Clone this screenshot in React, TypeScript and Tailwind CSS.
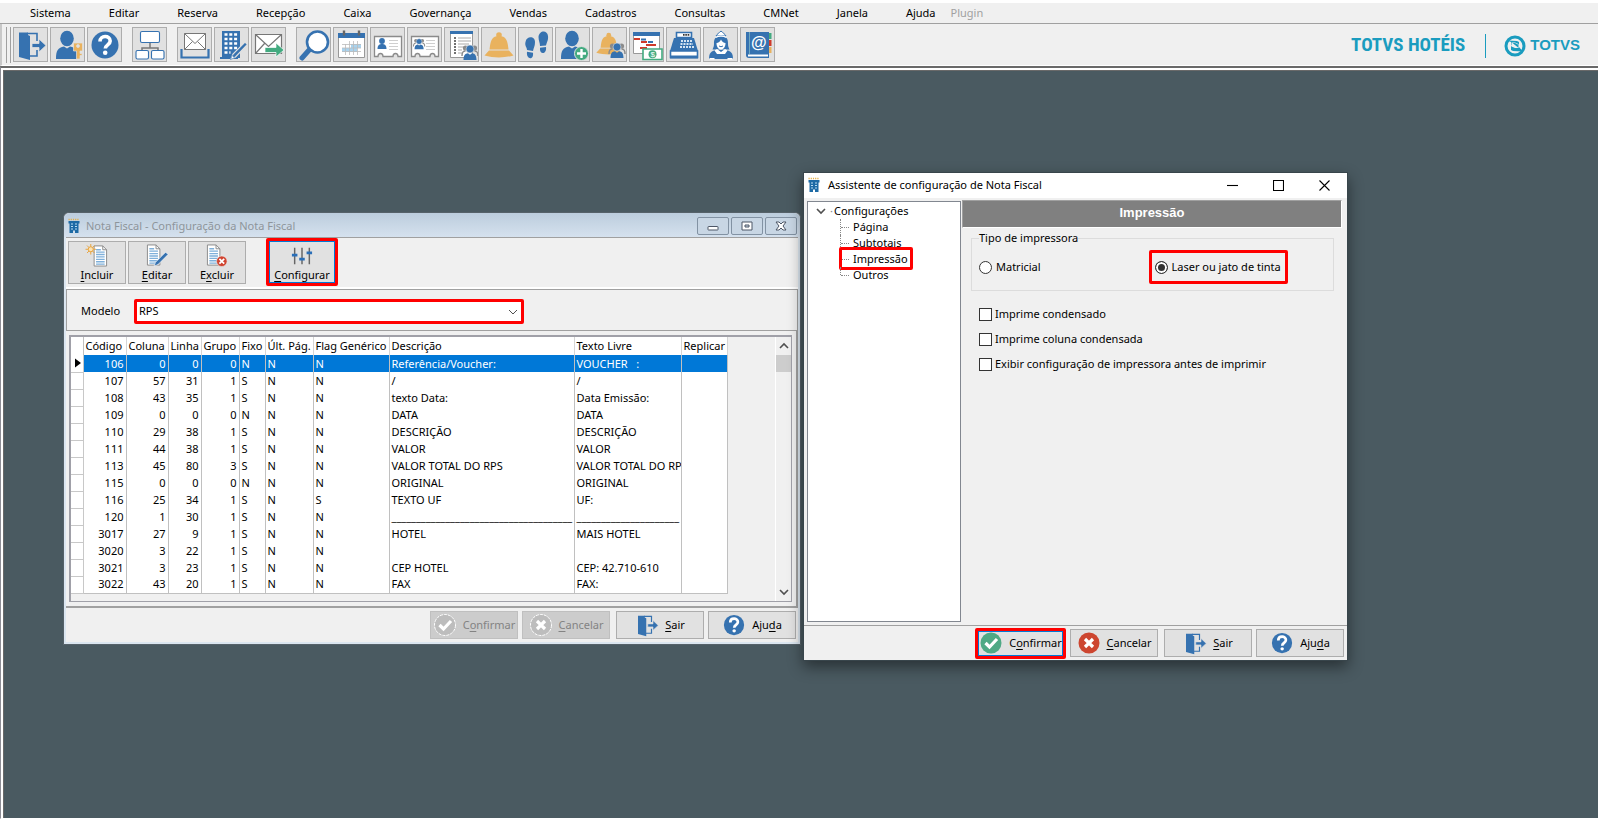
import React from "react";

const BLUE = "#3672b0";

const DoorIcon = ({ className = "size-8" }: { className?: string }) => (
  <svg viewBox="0 0 32 32" className={className} aria-hidden="true">
    <path d="M12 4.500h10V12M22 21v6H12" fill="none" stroke={BLUE} strokeWidth="1.600" />
    <path d="M4 3.500h9V6l2 1v24L4 28z" fill={BLUE} />
    <path d="M17 14.500h7V10l7 6.500-7 6.500v-4.500h-7z" fill={BLUE} stroke="#e1e1e1" strokeWidth=".8" />
  </svg>
);

const HelpIcon = ({ className = "size-8" }: { className?: string }) => (
  <svg viewBox="0 0 32 32" className={className} aria-hidden="true">
    <circle cx="16" cy="16" r="13.500" fill={BLUE} />
    <path d="M11 12.500c0-6.500 10.200-6.500 10.200-.5 0 3.800-4.900 3.800-4.900 7.500" fill="none" stroke="#fff" strokeWidth="3.600" />
    <circle cx="16.200" cy="23.800" r="2.300" fill="#fff" />
  </svg>
);

const Person = () => (
  <>
    <ellipse cx="15" cy="9.500" rx="6.800" ry="7.700" fill={BLUE} />
    <path d="M4 30c0-9 2-11 8-12.500l3 2 3-2c6 1.500 8 3.500 8 12.500z" fill={BLUE} />
  </>
);

const Trio = () => (
  <g>
    <circle cx="3.500" cy="4" r="2.600" fill="#8b8b8b" />
    <circle cx="12.500" cy="4" r="2.600" fill="#8b8b8b" />
    <path d="M0 12c0-4 1-5 3.500-5M16 12c0-4-1-5-3.500-5" fill="none" stroke="#8b8b8b" strokeWidth="1.500" />
    <circle cx="8" cy="5" r="4" fill={BLUE} stroke="#e1e1e1" strokeWidth=".6" />
    <path d="M1.500 16c0-4.500 1.500-6.500 4.500-6.800l2 1.500 2-1.500c3 .3 4.500 2.300 4.500 6.800z" fill={BLUE} />
  </g>
);

const Bell = () => (
  <g fill="#e9b25e">
    <circle cx="16" cy="6" r="2.800" />
    <path d="M6.500 20.500C7.500 11 9 7 16 7s8.500 4 9.500 13.500z" />
    <path d="M6 21.500h20l4.500 5c-9 2.500-20 2.500-29 0z" />
  </g>
);

const CardShape = () => (
  <>
    <path d="M2.500 7.500h27v20H26c0-4-5-4-5 0H11c0-4-5-4-5 0H2.500z" fill="#fff" stroke="#8b8b8b" strokeWidth="1.300" />
    <path d="M17 11.500h9M17 14.500h9M17 17.500h9M17 20.500h9" stroke="#cfcfcf" strokeWidth="1" />
  </>
);

const art: Record<string, React.ReactNode> = {
  user: (
    <>
      <Person />
      <g fill="#e9b25e" stroke="#e1e1e1" strokeWidth=".7">
        <path d="M21.500 14h9v8H28v2.500h2v2h-2V30h-3.500v-8h-3z" />
        <circle cx="26" cy="17" r="1.500" fill="#e1e1e1" />
      </g>
    </>
  ),
  tree: (
    <>
      <path d="M16 13v6M8 23v-4h16v4" fill="none" stroke="#777" strokeWidth="1.500" />
      <g fill="#fff" stroke={BLUE} strokeWidth="1.100">
        <rect x="6.500" y="2.500" width="19" height="11" rx="1.500" />
        <rect x="2" y="21.500" width="12.500" height="8.500" rx="1.500" />
        <rect x="17.500" y="21.500" width="12.500" height="8.500" rx="1.500" />
      </g>
    </>
  ),
  inbox: (
    <>
      <path d="M5.500 4.500h21v16h-21z" fill="#fff" stroke="#777" strokeWidth="1" />
      <path d="m5.500 4.500 10.500 10 10.500-10M5.500 20.500l8-8M26.500 20.500l-8-8" fill="none" stroke="#777" strokeWidth="1" />
      <path d="M2.500 20v8.500h27V20" fill="none" stroke={BLUE} strokeWidth="2.200" />
    </>
  ),
  building: (
    <>
      <path d="M6 2h18v27H6z" fill={BLUE} />
      <path d="M8.500 5.500H22M8.500 10H22M8.500 14.500H22M8.500 19H22M8.500 23.500h6" stroke="#fff" strokeWidth="2.400" strokeDasharray="3 1.800" />
      <path d="M4 29h18" stroke={BLUE} strokeWidth="2" />
      <path d="m15 30 2-5 12-12 2.500 2.500-12 12.500z" fill={BLUE} stroke="#e1e1e1" strokeWidth="1.200" />
      <path d="m14.500 30.500 1.700-4 2.300 2.300z" fill="#fff" stroke={BLUE} strokeWidth=".6" />
    </>
  ),
  send: (
    <>
      <path d="M2.500 5.500h26v19h-26z" fill="#fff" stroke="#777" strokeWidth="1.200" />
      <path d="m2.500 5.500 13 12 13-12M2.500 24.500l9-10" fill="none" stroke="#777" strokeWidth="1.200" />
      <path d="M12 18.500h11V14l8 7-8 7v-4.500H12z" fill="#43aa80" stroke="#fff" strokeWidth=".7" />
    </>
  ),
  search: (
    <>
      <path d="M12 20 4 29" stroke={BLUE} strokeWidth="5" strokeLinecap="round" />
      <circle cx="19.500" cy="13" r="10.500" fill="#fff" stroke={BLUE} strokeWidth="2.600" />
    </>
  ),
  calendar: (
    <>
      <path d="M3.500 4.500h26v24h-26z" fill="#fff" stroke="#999" />
      <path d="M3 4h27v5H3z" fill={BLUE} />
      <path d="M9 1.500v5M24 1.500v5" stroke="#666" strokeWidth="2.400" />
      <path d="M7 19h15v4H7zM16 15h10v4H16z" fill="#a9d3ee" />
      <path d="M10.500 15v11M14.500 12v14M18.500 12v14M22.500 12v14M7 15.500h19M7 19h19M7 22.500h19" stroke="#bbb" strokeWidth=".8" />
    </>
  ),
  card: (
    <>
      <CardShape />
      <circle cx="10" cy="12" r="2.900" fill={BLUE} />
      <path d="M5.500 20c0-4 2-5 4.500-5s4.500 1 4.500 5z" fill={BLUE} />
    </>
  ),
  groupcard: (
    <>
      <CardShape />
      <g transform="translate(4.500 9) scale(.7)">
        <Trio />
      </g>
    </>
  ),
  list: (
    <>
      <path d="M4.500 3.500h22v25h-22z" fill="#fff" stroke="#999" />
      <path d="M4 2h23v3H4z" fill={BLUE} />
      <path d="M12 9h13M12 12h13M12 15h11M12 18h6M12 21h4M12 24h4" stroke="#aaa" strokeWidth="1.200" />
      <path d="M8 9h2M8 12h2M8 15h2M8 18h2M8 21h2M8 24h2" stroke="#444" strokeWidth="1.400" />
      <g transform="translate(16 15)">
        <Trio />
      </g>
    </>
  ),
  bell: <Bell />,
  feet: (
    <g fill={BLUE}>
      <path d="M5.500 13c1-6.500 10-6 9.500.5 0 3.500-1.500 5.500-2 8.500L7 21c0-3-2.500-4-1.500-8zM7 22.800l6 .9c1 8-7 7-6-.9z" />
      <path d="M18.500 8c.5-7 9-7.500 9.500-1 .5 4.500-1.500 6.500-2 9.500l-6 .5c0-3-1.500-5.500-1.500-9zM20 18.800l6-.8c1 8-7 8-6 .8z" />
    </g>
  ),
  adduser: (
    <>
      <Person />
      <circle cx="24.500" cy="24.500" r="7" fill="#43aa80" stroke="#e1e1e1" />
      <path d="M24.500 20v9M20 24.500h9" stroke="#fff" strokeWidth="2.400" />
    </>
  ),
  bellgroup: (
    <>
      <g transform="translate(1 1) scale(.86)">
        <Bell />
      </g>
      <g transform="translate(15 13)">
        <Trio />
      </g>
    </>
  ),
  money: (
    <>
      <path d="M2.500 4.500h26v20h-26z" fill="#fff" stroke="#999" />
      <path d="M2 3h27v4H2z" fill={BLUE} />
      <path d="M3 10h6M10 13h6M15 16h10M9 19h7" stroke="#cf3a2b" strokeWidth="2" />
      <path d="M10 10.500h5M17 13h5" stroke={BLUE} strokeWidth="2" />
      <path d="M12 20h19v10.500H12z" fill="#fff" stroke="#43aa80" strokeWidth="1.600" />
      <circle cx="21.500" cy="25.300" r="4" fill="#43aa80" />
      <text x="19.400" y="28.200" fontSize="8" fill="#fff" fontFamily="Liberation Sans">$</text>
    </>
  ),
  register: (
    <>
      <path d="M8.500 3.500h15v5h-15z" fill="#fff" stroke={BLUE} strokeWidth="1.600" />
      <path d="M15 5.800h7" stroke="#333" strokeWidth="1.800" strokeDasharray="1.600 .7" />
      <path d="M6 9h20l4 13H2z" fill={BLUE} />
      <path d="M13 12h11M12.500 15H25M12 18h14" stroke="#d5e4f2" strokeWidth="1.800" strokeDasharray="2 1" />
      <path d="M2.500 22h27v6.500h-27z" fill="#fff" stroke={BLUE} strokeWidth="1.600" />
      <path d="M2 26.500h28v3H2z" fill={BLUE} />
    </>
  ),
  maid: (
    <>
      <path d="M11 7c1-2 3-3 5-5 2 2 4 3 5 5z" fill="#fff" stroke={BLUE} />
      <path d="M9 15C8 3 24 3 23 15c0 3 1 4 1.500 5.500h-17C8 19 9 18 9 15z" fill={BLUE} />
      <path d="M10.500 8.500c3-2 8-2 11 0" fill="none" stroke="#fff" strokeWidth="1.500" />
      <path d="M11.500 14c2 0 3.500-1.500 4.500-3.500 1 2 2.500 3.500 4.500 3.500 0 4-2 6.500-4.500 6.500S11.500 18 11.500 14z" fill="#fff" />
      <path d="M14 17q2 1.500 4 0" fill="none" stroke={BLUE} />
      <path d="M4 30c0-6 2-8 7-9h10c5 1 7 3 7 9z" fill={BLUE} />
      <path d="M9.500 21.500 12 25h8l2.500-3.500L20 20l-4 3-4-3z" fill="#fff" />
      <path d="M4.500 29h5v1.500h-5zM22.500 29h5v1.500h-5z" fill="#fff" />
    </>
  ),
  book: (
    <>
      <path d="M27 4h2.500v6H27z" fill="#43aa80" />
      <path d="M27 11h2.500v6H27z" fill="#cf3a2b" />
      <path d="M27 18h2.500v6H27z" fill="#e9b25e" />
      <path d="M4 3h23v26H7c-2 0-3-1-3-3z" fill={BLUE} />
      <path d="M6 26.500h20" stroke="#fff" strokeWidth="2" />
      <path d="M7.500 3v22" stroke="#9cc" strokeWidth=".6" />
      <text x="9" y="18.500" fontSize="16" fontWeight="bold" fill="#fff" fontFamily="Liberation Sans">@</text>
    </>
  ),
};

const tools: { name: string; label: string }[][] = [
  [
    { name: "door", label: "Sair" },
    { name: "user", label: "Usuário" },
    { name: "help", label: "Ajuda" },
  ],
  [{ name: "tree", label: "Estrutura" }],
  [
    { name: "inbox", label: "Mensagens" },
    { name: "building", label: "Hotel" },
    { name: "send", label: "Enviar" },
  ],
  [
    { name: "search", label: "Pesquisar" },
    { name: "calendar", label: "Calendário" },
    { name: "card", label: "Ficha" },
    { name: "groupcard", label: "Ficha de grupo" },
    { name: "list", label: "Lista" },
    { name: "bell", label: "Recepção" },
    { name: "feet", label: "Walk-in" },
    { name: "adduser", label: "Novo hóspede" },
    { name: "bellgroup", label: "Grupos" },
    { name: "money", label: "Contas" },
    { name: "register", label: "Caixa" },
    { name: "maid", label: "Governança" },
    { name: "book", label: "Agenda" },
  ],
];

const menus = [
  "Sistema", "Editar", "Reserva", "Recepção", "Caixa", "Governança",
  "Vendas", "Cadastros", "Consultas", "CMNet", "Janela", "Ajuda",
];

const HotelIcon = () => (
  <svg viewBox="0 0 12 16" className="h-4 w-3 shrink-0" aria-hidden="true">
    <path d="M.5 1.500h11" stroke="#e2b04a" strokeWidth="1.400" strokeDasharray="1.200 1" />
    <path d="M.5 3h11v2.500h-1V15H7v-2.500H5V15H1.500V5.500h-1z" fill="#1d6aa5" />
    <path d="M3 6h2M7 6h2M3 8.500h2M7 8.500h2M3 11h2M7 11h2" stroke="#b9dcf2" strokeWidth="1.100" />
  </svg>
);

const Sheet = () => (
  <>
    <path d="M5 1h9l4 4v17H5z" fill="#fff" stroke="#8a8a8a" />
    <path d="M14 1v4h4" fill="none" stroke="#8a8a8a" />
    <path d="M7 5h5M7 7.500h9M7 10h9M7 12.500h9M7 15h9M7 17.500h9M7 20h9" stroke="#7fb0da" strokeWidth="1.400" />
  </>
);

const NewDoc = () => (
  <svg viewBox="0 0 24 24" className="size-6" aria-hidden="true">
    <g transform="translate(4 1)">
      <Sheet />
    </g>
    <path d="M5.500 0v11M0 5.500h11M1.600 1.600l7.800 7.800M9.400 1.600 1.600 9.400" stroke="#e8a33d" strokeWidth="1" />
    <circle cx="5.500" cy="5.500" r="2.600" fill="#fbe3b5" stroke="#e8a33d" />
  </svg>
);
const EditDoc = () => (
  <svg viewBox="0 0 24 24" className="size-6" aria-hidden="true">
    <g transform="translate(-3 0)">
      <Sheet />
    </g>
    <path d="m9 23 1.500-4L21 8.500l2.500 2.500L13 21.500z" fill={BLUE} stroke="#fff" strokeWidth=".6" />
  </svg>
);
const DeleteDoc = () => (
  <svg viewBox="0 0 24 24" className="size-6" aria-hidden="true">
    <g transform="translate(-3 0)">
      <Sheet />
    </g>
    <circle cx="17" cy="18" r="5.500" fill="#d0432f" stroke="#eee" strokeWidth=".6" />
    <path d="m14.500 15.500 5 5M19.500 15.500l-5 5" stroke="#fff" strokeWidth="1.800" />
  </svg>
);
const Sliders = () => (
  <svg viewBox="0 0 24 24" className="size-6" aria-hidden="true">
    <path d="M4 3v18M12 3v18M20 3v18" stroke="#666" strokeWidth="1.600" />
    <path d="M1 9.500h6v3H1zM9 14h6v3H9zM17 7h6v3h-6z" fill="#2a6fb8" />
  </svg>
);

const Mark = ({ kind, muted = false }: { kind: "ok" | "no"; muted?: boolean }) => (
  <svg viewBox="0 0 24 24" className="size-6 shrink-0" aria-hidden="true">
    <circle
      cx="12" cy="12" r="10.500"
      fill={muted ? "#bdbdbd" : kind === "ok" ? "#4fa985" : "#cd4630"}
      stroke={muted ? "#fff" : "none"}
      strokeDasharray={muted ? "3 1" : undefined}
    />
    <path d={kind === "ok" ? "m6.500 12 4 4 7.500-8" : "m8 8 8 8M16 8l-8 8"} fill="none" stroke="#fff" strokeWidth="3.200" />
  </svg>
);

/* Caption with its keyboard accelerator underlined */
const Caption = ({ text, at }: { text: string; at: number }) => (
  <span>
    {text.slice(0, at)}
    <u className="underline-offset-2">{text[at]}</u>
    {text.slice(at + 1)}
  </span>
);

const DocButton = ({ icon, text, at }: { icon: React.ReactNode; text: string; at: number }) => (
  <button className="flex h-[43px] w-[58px] flex-col items-center justify-between border border-[#adadad] bg-[#e1e1e1] pt-0.5 leading-4">
    {icon}
    <Caption text={text} at={at} />
  </button>
);

const FootButton = ({ icon, text, at, look = "normal" }: {
  icon: React.ReactNode; text: string; at: number; look?: "normal" | "disabled" | "marked";
}) => (
  <button
    disabled={look === "disabled"}
    className={
      "flex items-center justify-center gap-1.5 text-[11px] " +
      (look === "disabled"
        ? "h-7 w-[88px] border border-[#bfbfbf] bg-[#cccccc] text-[#838383]"
        : look === "marked"
          ? "h-[31px] w-[91px] rounded-xs border-[3px] border-[#ff0000] bg-[#e1e1e1] inset-ring inset-ring-[#0078d7]"
          : "h-7 w-[88px] border border-[#adadad] bg-[#e1e1e1]")
    }
  >
    {icon}
    <Caption text={text} at={at} />
  </button>
);

const rows: string[][] = [
  ["106", "0", "0", "0", "N", "N", "N", "Referência/Voucher:", "VOUCHER   :"],
  ["107", "57", "31", "1", "S", "N", "N", "/", "/"],
  ["108", "43", "35", "1", "S", "N", "N", "texto Data:", "Data Emissão:"],
  ["109", "0", "0", "0", "N", "N", "N", "DATA", "DATA"],
  ["110", "29", "38", "1", "S", "N", "N", "DESCRIÇÃO", "DESCRIÇÃO"],
  ["111", "44", "38", "1", "S", "N", "N", "VALOR", "VALOR"],
  ["113", "45", "80", "3", "S", "N", "N", "VALOR TOTAL DO RPS", "VALOR TOTAL DO RPS"],
  ["115", "0", "0", "0", "N", "N", "N", "ORIGINAL", "ORIGINAL"],
  ["116", "25", "34", "1", "S", "N", "S", "TEXTO UF", "UF:"],
  ["120", "1", "30", "1", "S", "N", "N", "_".repeat(37), "_".repeat(21)],
  ["3017", "27", "9", "1", "S", "N", "N", "HOTEL", "MAIS HOTEL"],
  ["3020", "3", "22", "1", "S", "N", "N", "", ""],
  ["3021", "3", "23", "1", "S", "N", "N", "CEP HOTEL", "CEP: 42.710-610"],
  ["3022", "43", "20", "1", "S", "N", "N", "FAX", "FAX:"],
];

const columns = ["Código", "Coluna", "Linha", "Grupo", "Fixo", "Últ. Pág.", "Flag Genérico", "Descrição", "Texto Livre", "Replicar"];

const Grid = () => (
  <table className="w-[656px] table-fixed border-collapse bg-white text-[11px] leading-4">
    <colgroup>
      <col className="w-3" />
      <col className="w-[43px]" />
      <col className="w-[42px]" />
      <col className="w-[33px]" />
      <col className="w-[38px]" />
      <col className="w-[26px]" />
      <col className="w-[48px]" />
      <col className="w-[76px]" />
      <col className="w-[185px]" />
      <col className="w-[107px]" />
      <col className="w-[46px]" />
    </colgroup>
    <thead>
      <tr className="h-[18px]">
        <th className="border-r border-[#c0c0c0] p-0" />
        {columns.map((c) => (
          <th key={c} className="overflow-visible border-r border-[#d5d5d5] p-0 pl-0.5 text-left font-normal whitespace-nowrap">
            {c}
          </th>
        ))}
      </tr>
    </thead>
    <tbody className="border-b border-[#c0c0c0]">
      {rows.map((r, i) => (
        <tr key={r[0]} className={i === 0 ? "h-[17px] bg-[#0078d7] text-white" : "h-[17px]"}>
          <td className="border-r border-b border-[#c8c8c8] bg-white p-0">
            {i === 0 && (
              <svg viewBox="0 0 8 12" className="ml-1 h-3 w-1.5" aria-hidden="true">
                <path d="M0 0 8 6 0 12z" fill="#000" />
              </svg>
            )}
          </td>
          {r.map((v, j) => (
            <td
              key={j}
              className={
                "overflow-hidden border-r border-[#c0c0c0] p-0 whitespace-pre " +
                (j < 4 ? "pr-0.5 text-right" : "pl-0.5")
              }
            >
              {v}
            </td>
          ))}
          <td className="border-r border-[#c0c0c0] p-0" />
        </tr>
      ))}
    </tbody>
  </table>
);

const Chevron = ({ d, className }: { d: string; className: string }) => (
  <svg viewBox="0 0 10 10" className={className} aria-hidden="true">
    <path d={d} fill="none" stroke="#505050" strokeWidth="1.600" />
  </svg>
);

const InvoiceWindow = () => (
  <section className="absolute top-[212px] left-[63px] flex w-[738px] flex-col rounded-t-md border border-[#56626a] bg-[#f0f0f0] pb-0.5 shadow-[inset_0_0_0_2px_#dbe6f0]">
    <header className="flex h-6 items-center gap-1.5 rounded-t-md bg-gradient-to-b from-[#bccddd] to-[#d5e1ee] pt-0.5 pr-[3px] pl-1 text-[#8e959b]">
      <HotelIcon />
      <h2 className="flex-1 text-[11px]">Nota Fiscal - Configuração da Nota Fiscal</h2>
      <div className="flex gap-0.5">
        {["Minimizar", "Restaurar", "Fechar"].map((l, i) => (
          <button key={l} aria-label={l} className="flex h-[18px] w-8 items-center justify-center rounded-xs border border-[#8292a3] bg-[#c8d6e4]">
            <svg viewBox="0 0 12 10" className="h-2.5 w-3" aria-hidden="true">
              <g fill="#fff" stroke="#4d5666" strokeWidth="1">
                {i === 0 && <rect x="1" y="5.500" width="10" height="3.500" rx=".5" />}
                {i === 1 && <path fillRule="evenodd" d="M1 1h10v8H1zM4 4h4v2H4z" />}
                {i === 2 && <path d="M1 1h3l2 2 2-2h3L8 5l3 4H8L6 7 4 9H1l3-4z" />}
              </g>
            </svg>
          </button>
        ))}
      </div>
    </header>
    <div className="mx-0.5 flex h-[52px] items-start gap-0.5 border-t border-b-2 border-t-[#a0a0a0] border-b-white pt-[3px] pl-0.5 text-[11px]">
      <DocButton icon={<NewDoc />} text="Incluir" at={0} />
      <DocButton icon={<EditDoc />} text="Editar" at={0} />
      <DocButton icon={<DeleteDoc />} text="Excluir" at={1} />
      <button className="-mt-[3px] ml-[18px] flex h-12 w-[72px] flex-col items-center justify-between rounded-xs border-[3px] border-[#ff0000] bg-[#e1e1e1] pt-1 leading-4 inset-ring inset-ring-[#0078d7]">
        <Sliders />
        <Caption text="Configurar" at={0} />
      </button>
    </div>
    <div className="mx-0.5 flex h-[42px] items-center border border-[#a0a0a0] pt-0.5 pl-[14px]">
      <label htmlFor="modelo" className="w-[53px] text-[11px]">Modelo</label>
      <div className="relative w-[390px]">
        <select id="modelo" className="block h-[25px] w-full appearance-none rounded-xs border-[3px] border-[#ff0000] bg-white pl-0.5 text-[11px] leading-4">
          <option>RPS</option>
        </select>
        <svg viewBox="0 0 10 10" className="pointer-events-none absolute top-2 right-1.5 size-2.5" aria-hidden="true">
          <path d="M1 3l4 4 4-4" fill="none" stroke="#505050" strokeWidth="1" />
        </svg>
      </div>
    </div>
    <div className="mx-0.5 border-r-2 border-b-2 border-[#a0a0a0] py-1 pr-1 pl-[3px]">
      <div className="flex h-[267px] justify-between border-2 border-r border-b border-[#a0a0a8]">
        <div className="overflow-hidden">
          <Grid />
        </div>
        <div className="flex w-4 flex-col items-center border-l border-white">
          <Chevron d="M1 7l4-4 4 4" className="my-1 size-2.5" />
          <div className="h-[17px] w-full bg-[#cdcdcd]" />
          <Chevron d="M1 3l4 4 4-4" className="mt-auto mb-1 size-2.5" />
        </div>
      </div>
    </div>
    <footer className="flex h-[34px] items-center justify-end gap-1 pr-1">
      <FootButton icon={<Mark kind="ok" muted />} text="Confirmar" at={1} look="disabled" />
      <FootButton icon={<Mark kind="no" muted />} text="Cancelar" at={0} look="disabled" />
      <span className="ml-0.5">
        <FootButton icon={<DoorIcon className="size-6" />} text="Sair" at={0} />
      </span>
      <FootButton icon={<HelpIcon className="size-6" />} text="Ajuda" at={3} />
    </footer>
  </section>
);

const branches = ["Página", "Subtotais", "Impressão", "Outros"];
const options = ["Imprime condensado", "Imprime coluna condensada", "Exibir configuração de impressora antes de imprimir"];

const Radio = ({ label, on = false }: { label: string; on?: boolean }) => (
  <label className="flex items-center gap-1 text-[11px] leading-4">
    <input
      type="radio"
      name="impressora"
      defaultChecked={on}
      className="size-[13px] appearance-none rounded-full border border-[#333] bg-white checked:bg-[#333] checked:inset-ring-2 checked:inset-ring-white"
    />
    {label}
  </label>
);

const AssistantWindow = () => (
  <section className="absolute top-[172px] left-[803px] flex h-[489px] w-[545px] flex-col border border-[#38454b] bg-[#f0f0f0] shadow-[0_6px_14px_rgba(0,0,0,0.45)]">
    <header className="flex h-[25px] shrink-0 items-center gap-2 bg-white pr-1 pb-px pl-1">
      <HotelIcon />
      <h2 className="flex-1 text-[11px]">Assistente de configuração de Nota Fiscal</h2>
      <div className="flex gap-2">
        {["Minimizar", "Maximizar", "Fechar"].map((l, i) => (
          <button key={l} aria-label={l} className="flex w-[38px] justify-center">
            <svg viewBox="0 0 11 11" className="size-[11px]" aria-hidden="true">
              <path d={["M0 5.500h11", "M.5.5h10v10H.5z", "M.5.5l10 10M10.500.5l-10 10"][i]} fill="none" stroke="#000" strokeWidth="1.100" />
            </svg>
          </button>
        ))}
      </div>
    </header>
    <div className="flex min-h-0 flex-1 gap-px pt-0.5 pr-[5px] pl-[3px]">
      <nav className="mt-px mb-[3px] w-[154px] border border-[#828790] bg-white pt-px text-[11px] leading-4">
        <div className="flex items-center pl-2">
          <Chevron d="M1 3l4 4 4-4" className="mr-1 size-2.5" />
          <span className="w-1 text-[#888]">·</span>
          Configurações
        </div>
        <ul className="ml-8">
          {branches.map((b, i) => (
            <li key={b} className="relative flex h-4 items-center gap-1">
              <span className={"w-px self-start border-l border-dotted border-[#888] " + (i === 3 ? "h-2" : "h-4")} />
              <span className="-ml-1 w-2 border-t border-dotted border-[#888]" />
              {b}
              {b === "Impressão" && (
                <span className="absolute -top-1 -left-px h-[23px] w-[74px] rounded-xs border-[3px] border-[#ff0000]" />
              )}
            </li>
          ))}
        </ul>
      </nav>
      <div className="flex-1">
        <h3 className="h-7 border border-t-[#a0a0a0] border-r-white border-b-white border-l-[#a0a0a0] bg-[#808080] text-center font-['Liberation_Sans',sans-serif] text-[13px] leading-6 font-bold text-white">
          Impressão
        </h3>
        <fieldset className="mt-0.5 mr-2 ml-[9px] h-[61px] border border-[#dcdcdc] px-[7px]">
          <legend className="text-[11px] leading-4">Tipo de impressora</legend>
          <div className="grid grid-cols-2 items-center pt-1">
            <Radio label="Matricial" />
            <div className="-ml-1 flex h-[34px] w-[139px] items-center rounded-xs border-[3px] border-[#ff0000] pl-[3px]">
              <Radio label="Laser ou jato de tinta" on />
            </div>
          </div>
        </fieldset>
        <div className="mt-[15px] ml-[17px] flex flex-col gap-[9px]">
          {options.map((o) => (
            <label key={o} className="flex items-center gap-[3px] text-[11px] leading-4">
              <input type="checkbox" className="size-[13px] appearance-none border border-[#333] bg-white" />
              {o}
            </label>
          ))}
        </div>
      </div>
    </div>
    <footer className="flex h-[35px] shrink-0 items-center justify-end gap-1 border-t border-[#a0a0a0] pr-[3px]">
      <FootButton icon={<Mark kind="ok" />} text="Confirmar" at={1} look="marked" />
      <FootButton icon={<Mark kind="no" />} text="Cancelar" at={0} />
      <span className="ml-0.5">
        <FootButton icon={<DoorIcon className="size-6" />} text="Sair" at={0} />
      </span>
      <FootButton icon={<HelpIcon className="size-6" />} text="Ajuda" at={3} />
    </footer>
  </section>
);

export default function App() {
  return (
    <div className="flex min-h-screen flex-col bg-[#f0f0f0] font-['Noto_Sans',sans-serif] text-black">
      <nav className="flex h-6 items-center gap-[38px] border-t-[3px] border-b border-t-white border-b-[#a0a0a0] pl-[30px] text-[11px] leading-4">
        {menus.map((m) => (
          <button key={m}>{m}</button>
        ))}
        <button disabled className="-ml-[23px] text-[#a0a0a0]">Plugin</button>
      </nav>
      <div className="flex h-[42px] items-center border-b border-l-2 border-b-white border-l-[#c8c8c8] pr-[18px]">
        <div className="mr-0.5 ml-1 h-9 w-[5px] border-x border-[#a0a0a0]" />
        <div className="flex gap-[10px]">
          {tools.map((g, i) => (
            <div key={i} className="flex gap-0.5">
              {g.map((t) => (
                <button key={t.name} aria-label={t.label} className="flex size-[35px] items-center justify-center border border-[#adadad] bg-[#e1e1e1]">
                  {t.name === "door" ? (
                    <DoorIcon />
                  ) : t.name === "help" ? (
                    <HelpIcon />
                  ) : (
                    <svg viewBox="0 0 32 32" className="size-8" aria-hidden="true">
                      {art[t.name]}
                    </svg>
                  )}
                </button>
              ))}
            </div>
          ))}
        </div>
        <div className="ml-auto flex items-center pt-0.5 text-[#1a9cbf]">
          <span className="font-['Liberation_Sans_Narrow','Roboto_Condensed','Liberation_Sans',sans-serif] text-[19px] font-bold">TOTVS HOTÉIS</span>
          <span className="mr-[18px] ml-5 h-6 w-px bg-[#1a9cbf]" />
          <svg viewBox="0 0 22 22" className="mr-1 size-[22px]" aria-hidden="true">
            <circle cx="11" cy="11" r="9" fill="none" stroke="#1a9cbf" strokeWidth="3" />
            <path d="M3 5.500 13 6l2 1v5h-4l-4-2V7zM19 16.500 9 16l-2-1v-4l4 1h4z" fill="#1a9cbf" />
            <path d="M7.500 7.500v4l3.500 1.500h3.500v-4L11 7.500z" fill="#f0f0f0" />
            <path d="m8.500 8 5.500 4.500V9.500L11 8z" fill="#1a9cbf" />
          </svg>
          <span className="font-['Liberation_Sans',sans-serif] text-[15px] font-bold">TOTVS</span>
        </div>
      </div>
      <main className="flex flex-1 flex-col border-t-2 border-b border-l border-t-[#696969] border-b-white border-l-[#8c8c94] bg-white pt-0.5 pl-0.5">
        <div className="flex-1 border-t border-l border-[#696969] bg-[#4a5a61]" />
      </main>
      <InvoiceWindow />
      <AssistantWindow />
    </div>
  );
}
